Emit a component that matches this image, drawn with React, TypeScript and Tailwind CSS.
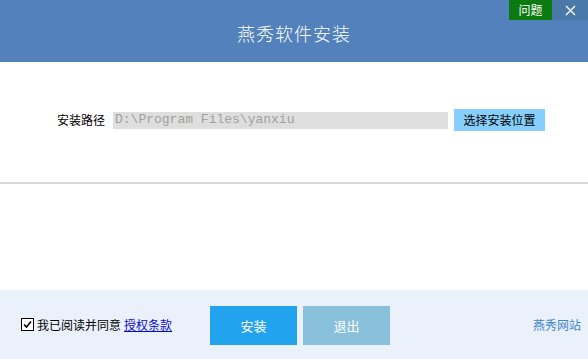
import React, { useState } from 'react';

const font = { fontFamily: '"Noto Sans CJK SC", "Noto Sans", sans-serif' };

export default function App() {
  const [path, setPath] = useState('D:\\Program Files\\yanxiu');
  const [agreed, setAgreed] = useState(true);

  return (
    <div className="w-[588px] h-[359px] flex flex-col bg-white overflow-hidden" style={font}>
      {/* Header */}
      <div className="relative h-[62px] bg-[#5281bb] flex items-center justify-center">
        <h1 className="text-[18px] text-white font-light tracking-[1px] leading-none mt-[4px]">燕秀软件安装</h1>
        <div className="absolute top-0 right-0 flex h-[20px]">
          <button className="w-[43px] h-full bg-[#0b7a10] text-white text-[12px] leading-none">问题</button>
          <button className="w-[36px] h-full bg-[#4a78a9] text-white flex items-center justify-center">
            <svg width="11" height="11" viewBox="0 0 11 11">
              <path d="M1 1L10 10M10 1L1 10" stroke="white" strokeWidth="1.4" />
            </svg>
          </button>
        </div>
      </div>

      {/* Body */}
      <div className="h-[122px] border-b-2 border-[#d8d8d8] flex items-start">
        <div className="flex items-center mt-[47px] ml-[57px]">
          <span className="text-[12px] text-black leading-none mr-[8px]">安装路径</span>
          <input
            value={path}
            onChange={(e) => setPath(e.target.value)}
            className="w-[335px] h-[17px] bg-[#dedede] text-[#a0a0a0] text-[13px] px-[2px] outline-none"
            style={{ fontFamily: '"Liberation Mono", monospace' }}
          />
          <button className="ml-[6px] w-[91px] h-[22px] bg-[#87cefa] text-black text-[12px] leading-none">
            选择安装位置
          </button>
        </div>
      </div>

      <div className="flex-1" />

      {/* Footer */}
      <div className="h-[69px] bg-[#eaf1fa] flex items-center pl-[21px] pr-[7px]">
        <label className="flex items-center text-[12px] text-black cursor-pointer w-[189px]">
          <span
            onClick={() => setAgreed(!agreed)}
            className="w-[13px] h-[13px] border border-black bg-white flex items-center justify-center mr-[3px]"
          >
            {agreed && (
              <svg width="9" height="9" viewBox="0 0 9 9">
                <path d="M1 4.5L3.5 7L8 1.5" stroke="black" strokeWidth="1.6" fill="none" />
              </svg>
            )}
          </span>
          <span>我已阅读并同意</span>
          <a className="ml-[3px] text-[#0a0acc] underline">授权条款</a>
        </label>
        <div className="flex gap-[6px] mt-[2px]">
          <button className="w-[87px] h-[39px] bg-[#22a3ee] text-white text-[13px]">安装</button>
          <button className="w-[87px] h-[39px] bg-[#89c0dc] text-white text-[13px]">退出</button>
        </div>
        <div className="flex-1" />
        <a className="text-[12px] text-[#3a86cb]">燕秀网站</a>
      </div>
    </div>
  );
}
